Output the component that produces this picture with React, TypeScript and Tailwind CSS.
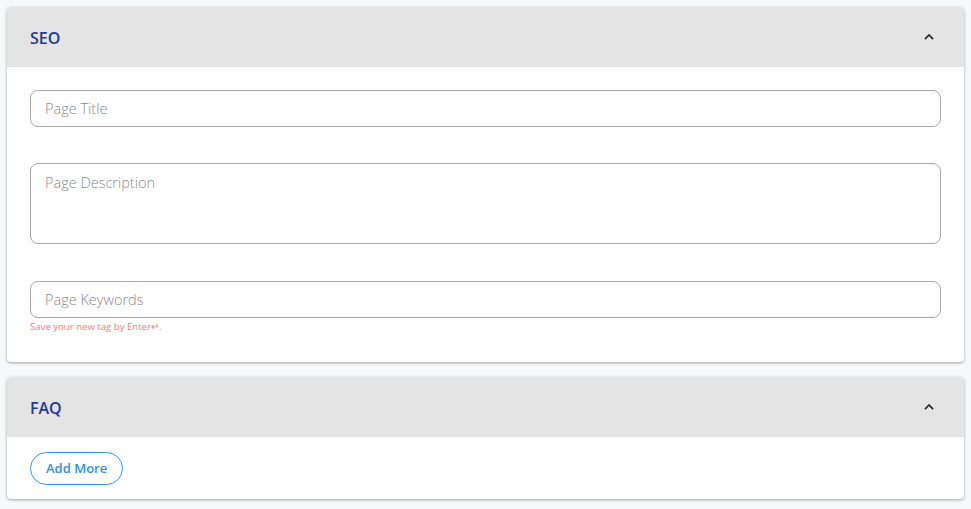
import { useState } from "react";

function Chevron({ open }: { open: boolean }) {
  return (
    <svg
      width="14"
      height="14"
      viewBox="0 0 24 24"
      className={open ? "" : "rotate-180"}
      fill="none"
      stroke="#2a2a2a"
      strokeWidth="3"
    >
      <path d="M5 15.5l7-7 7 7" />
    </svg>
  );
}

function Section({
  title,
  children,
}: {
  title: string;
  children: React.ReactNode;
}) {
  const [open, setOpen] = useState(true);
  return (
    <div className="bg-white rounded shadow-[0_1px_3px_rgba(0,0,0,0.35)] overflow-hidden">
      <button
        onClick={() => setOpen(!open)}
        className="w-full h-[60px] bg-[#e4e4e4] flex items-center justify-between pl-[23px] pr-[28px]"
      >
        <span className="text-[16px] font-semibold text-[#1f3a9a] pt-px">{title}</span>
        <Chevron open={open} />
      </button>
      {open && children}
    </div>
  );
}

export default function App() {
  const [keywords, setKeywords] = useState("");
  return (
    <div
      className="min-h-[509px] bg-[#f7f8fa] px-[7px] pt-[7px] pb-2 flex flex-col gap-[15px]"
      style={{ fontFamily: '"Open Sans", "Noto Sans", sans-serif' }}
    >
      <Section title="SEO">
        <div className="px-[23px] pt-[23px] pb-[29px] flex flex-col">
          <input
            placeholder="Page Title"
            className="h-[37px] w-full rounded-lg border border-[#a8a8a8] px-[14px] text-[14.5px] text-gray-700 placeholder:text-[#8a8a8a] placeholder:font-light outline-none"
          />
          <textarea
            placeholder="Page Description"
            className="mt-[36px] h-[81px] w-full resize-none rounded-lg border border-[#a8a8a8] px-[14px] py-[8px] text-[14.5px] text-gray-700 placeholder:text-[#8a8a8a] placeholder:font-light outline-none"
          />
          <input
            placeholder="Page Keywords"
            value={keywords}
            onChange={(e) => setKeywords(e.target.value)}
            className="mt-[37px] h-[37px] w-full rounded-lg border border-[#a8a8a8] px-[14px] text-[14.5px] text-gray-700 placeholder:text-[#8a8a8a] placeholder:font-light outline-none"
          />
          <p className="mt-[3px] text-[9.6px] leading-[12px] text-[#f47c7c]">
            Save your new tag by Enter↵.
          </p>
        </div>
      </Section>
      <Section title="FAQ">
        <div className="px-[23px] pt-[15px] pb-[14px]">
          <button className="h-[33px] px-[15px] rounded-full border border-[#2f96f0] text-[13px] font-semibold text-[#2f8fe8]">
            Add More
          </button>
        </div>
      </Section>
    </div>
  );
}
